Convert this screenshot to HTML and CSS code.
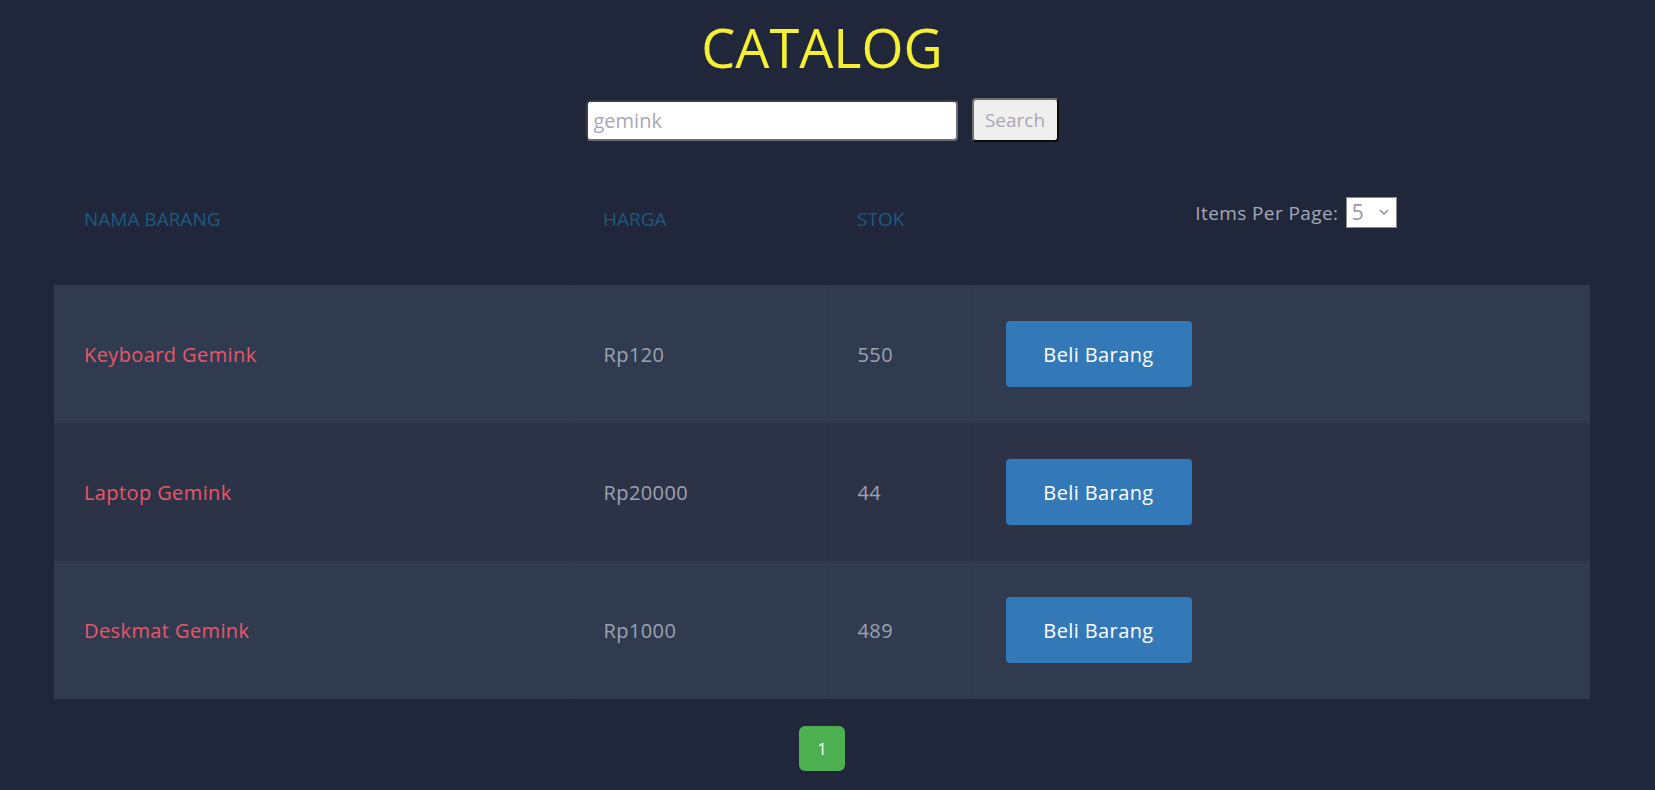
FILE: index.html
```html
<!DOCTYPE html>
<html lang="id">
<head>
<meta charset="utf-8">
<title>Catalog</title>
<link rel="stylesheet" href="styles.css">
</head>
<body>
<div class="page">
  <h1 class="title">CATALOG</h1>
  <form class="search">
    <input class="search-input" type="text" placeholder="gemink">
    <button class="search-btn" type="button">Search</button>
  </form>
  <table class="catalog">
    <colgroup>
      <col class="c1"><col class="c2"><col class="c3"><col class="c4">
    </colgroup>
    <thead>
      <tr>
        <th class="h">NAMA BARANG</th>
        <th class="h">HARGA</th>
        <th class="h">STOK</th>
        <th class="h per-page">
          <span class="per-label">Items Per Page:</span>
          <span class="select"><span class="select-val">5</span><svg class="chev" width="10" height="6" viewBox="0 0 10 6"><path d="M1 1l4 4 4-4" fill="none" stroke="#8a8a8a" stroke-width="1.4"/></svg></span>
        </th>
      </tr>
    </thead>
    <tbody>
      <tr class="odd">
        <td class="name">Keyboard Gemink</td>
        <td class="num">Rp120</td>
        <td class="num">550</td>
        <td class="act"><button class="buy" type="button">Beli Barang</button></td>
      </tr>
      <tr class="even">
        <td class="name">Laptop Gemink</td>
        <td class="num">Rp20000</td>
        <td class="num">44</td>
        <td class="act"><button class="buy" type="button">Beli Barang</button></td>
      </tr>
      <tr class="odd">
        <td class="name">Deskmat Gemink</td>
        <td class="num">Rp1000</td>
        <td class="num">489</td>
        <td class="act"><button class="buy" type="button">Beli Barang</button></td>
      </tr>
    </tbody>
  </table>
  <div class="pager">
    <button class="page-btn" type="button">1</button>
  </div>
</div>
</body>
</html>
```
FILE: styles.css
```css
html, body {
  margin: 0;
  padding: 0;
  background: #20273a;
}
body {
  font-family: "Open Sans", "Noto Sans", sans-serif;
  height: 790px;
  overflow: hidden;
}
.page {
  width: 1644px;
  display: flex;
  flex-direction: column;
  align-items: center;
}
.title {
  margin: 13px 0 0 0;
  font-size: 54px;
  line-height: 68px;
  font-weight: 400;
  color: #f5f132;
  letter-spacing: 0;
}
.search {
  margin-top: 17px;
  display: flex;
  gap: 14px;
  align-items: center;
}
.search-input {
  box-sizing: border-box;
  width: 372px;
  height: 41px;
  border: 2px solid #6b6d76;
  border-top-color: #3a3c44;
  border-left-color: #3a3c44;
  border-radius: 4px;
  background: #fff;
  padding: 0 6px;
  font-family: "Open Sans", sans-serif;
  font-size: 20px;
  outline: none;
}
.search-input::placeholder {
  color: #aba6b6;
}
.search-btn {
  box-sizing: border-box;
  width: 87px;
  height: 44px;
  background: #efefef;
  border: 2px solid #0c0c0c;
  border-top-color: #6f6f6f;
  border-left-color: #6f6f6f;
  border-radius: 4px;
  color: #aba6b6;
  font-family: "Open Sans", sans-serif;
  font-size: 19px;
  padding: 0;
}
.catalog {
  margin-top: 11px;
  width: 1536px;
  border-collapse: collapse;
  table-layout: fixed;
}
.c1 { width: 519px; }
.c2 { width: 254px; }
.c3 { width: 145px; }
.c4 { width: 618px; }
.catalog thead tr {
  height: 132px;
}
.h {
  text-align: left;
  font-weight: 400;
  font-size: 19px;
  color: #1b5b82;
  padding: 0 30px;
  vertical-align: middle;
  letter-spacing: 0;
}
.h.per-page {
  text-align: center;
  padding: 0 0 14px 30px;
  color: #a5a8b8;
  font-size: 19px;
  letter-spacing: 0.4px;
}
.per-label {
  vertical-align: middle;
}
.select {
  display: inline-flex;
  align-items: center;
  justify-content: space-between;
  box-sizing: border-box;
  width: 51px;
  height: 31px;
  background: #fff;
  border: 1px solid #8a8a8a;
  margin-left: 2px;
  padding: 0 7px 0 5px;
  vertical-align: middle;
}
.select-val {
  color: #9b97ad;
  font-size: 21px;
}
.catalog tbody tr {
  height: 138px;
}
.odd { background: #313b50; }
.even { background: #2d3346; }
.catalog td {
  padding: 0 30px;
  vertical-align: middle;
  font-size: 20px;
  letter-spacing: 0.4px;
  border-left: 1px solid rgba(0, 0, 0, 0.05);
}
.catalog td:first-child {
  border-left: none;
}
.name {
  color: #ea5669;
}
.num {
  color: #9da2b2;
}
.catalog td.act {
  padding-left: 33px;
}
.buy {
  width: 186px;
  height: 66px;
  background: #3479b7;
  color: #fff;
  border: none;
  border-radius: 4px;
  font-family: "Open Sans", sans-serif;
  font-size: 20px;
  letter-spacing: 0.4px;
  padding: 0;
}
.pager {
  margin-top: 27px;
  display: flex;
  justify-content: center;
}
.page-btn {
  width: 46px;
  height: 45px;
  background: #4caf50;
  border: none;
  border-radius: 6px;
  color: #fff;
  font-family: "Open Sans", sans-serif;
  font-size: 17px;
  padding: 0;
}
```
